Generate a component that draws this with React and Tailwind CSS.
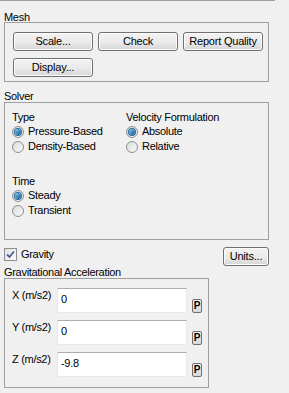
import React from 'react';

const font = { fontFamily: '"Liberation Sans", Arial, sans-serif' };

const Btn = ({ children, className = '' }) => (
  <button
    className={`h-[19px] rounded-[3px] border border-[#707070] bg-gradient-to-b from-[#f2f2f2] via-[#ebebeb] to-[#d6d6d6] text-[11px] leading-none tracking-[-0.2px] text-black shadow-[inset_0_0_0_1px_#fcfcfc] ${className}`}
  >
    {children}
  </button>
);

const Radio = ({ checked, label }) => (
  <div className="flex h-[15px] items-center gap-[4px]">
    <span className="flex h-[12px] w-[12px] items-center justify-center rounded-full border border-[#8e8f8f] bg-gradient-to-br from-[#d9d9d9] to-[#fafafa]">
      {checked && (
        <span className="h-[6px] w-[6px] rounded-full bg-gradient-to-br from-[#7fc3e8] to-[#0d5a8e] shadow-[0_0_0_1px_#1e6aa0]" />
      )}
    </span>
    <span className="text-[11px] leading-none">{label}</span>
  </div>
);

const Field = ({ label, value }) => (
  <div className="flex items-start">
    <span className="w-[45px] text-[11px] leading-[14px]">{label}</span>
    <div className="h-[25px] w-[130px] border border-[#e3e9ef] border-t-[#abadb3] bg-white px-[3px] pt-[3px] text-[11px] leading-[14px]">
      {value}
    </div>
    <button className="ml-[5px] mt-[11px] flex h-[14px] w-[10px] items-center justify-center rounded-[2px] border border-[#707070] bg-gradient-to-b from-[#f2f2f2] to-[#d6d6d6] text-[10px] font-bold leading-none">
      P
    </button>
  </div>
);

export default function App() {
  return (
    <div style={font} className="relative h-[393px] w-[289px] overflow-hidden bg-[#f0f0f0] text-black tracking-[-0.3px]">
      <div className="h-px w-[275px] bg-[#a0a0a0]" />

      {/* Mesh */}
      <div className="ml-[4px] mt-[10px] h-[11px] text-[11px] leading-[12px]">Mesh</div>
      <div className="ml-[4px] h-[60px] w-[265px] border border-[#a0a0a0] pl-[8px] pt-[9px]">
        <div className="flex gap-[5px]">
          <Btn className="w-[80px]">Scale...</Btn>
          <Btn className="w-[80px]">Check</Btn>
          <Btn className="w-[80px]">Report Quality</Btn>
        </div>
        <div className="mt-[3px]">
          <Btn className="w-[80px]">Display...</Btn>
        </div>
      </div>

      {/* Solver */}
      <div className="ml-[4px] mt-[8px] h-[12px] text-[11px] leading-[12px]">Solver</div>
      <div className="ml-[4px] h-[138px] w-[265px] border border-[#a0a0a0] pl-[7px] pt-[8px]">
        <div className="flex">
          <div className="w-[114px]">
            <div className="h-[13px] text-[11px] leading-[13px]">Type</div>
            <Radio checked label="Pressure-Based" />
            <Radio label="Density-Based" />
          </div>
          <div>
            <div className="h-[13px] text-[11px] leading-[13px]">Velocity Formulation</div>
            <Radio checked label="Absolute" />
            <Radio label="Relative" />
          </div>
        </div>
        <div className="mt-[21px] h-[13px] text-[11px] leading-[13px]">Time</div>
        <Radio checked label="Steady" />
        <Radio label="Transient" />
      </div>

      {/* Gravity */}
      <div className="mt-[7px] flex w-[269px] items-start justify-between pl-[4px]">
        <div className="mt-[1px] flex items-center gap-[4px]">
          <span className="flex h-[13px] w-[13px] items-center justify-center border border-[#8e8f8f] bg-gradient-to-br from-[#e0e0e0] to-[#fbfbfb]">
            <svg width="9" height="9" viewBox="0 0 9 9">
              <path d="M1 4.5 L3.5 7 L8 1.5" fill="none" stroke="#4a5f97" strokeWidth="1.8" />
            </svg>
          </span>
          <span className="text-[11px] leading-none">Gravity</span>
        </div>
        <Btn className="w-[46px]">Units...</Btn>
      </div>
      <div className="ml-[4px] h-[12px] text-[11px] leading-[12px]">Gravitational Acceleration</div>
      <div className="ml-[4px] flex h-[110px] w-[205px] flex-col gap-[7px] border border-[#a0a0a0] pl-[7px] pt-[9px]">
        <Field label="X (m/s2)" value="0" />
        <Field label="Y (m/s2)" value="0" />
        <Field label="Z (m/s2)" value="-9.8" />
      </div>
    </div>
  );
}
